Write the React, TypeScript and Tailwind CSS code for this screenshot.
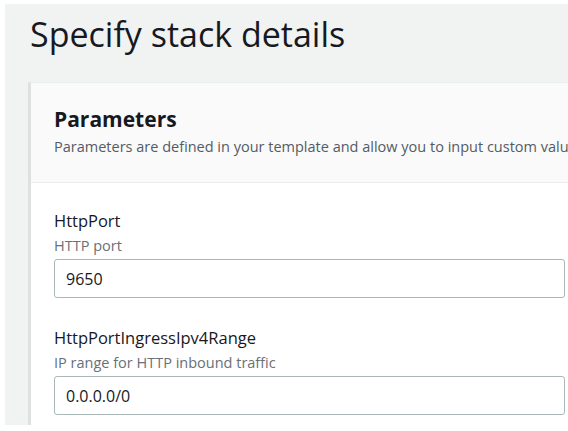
export default function App() {
  return (
    <div
      className="w-[568px] h-[431px] bg-white pt-[4px] pl-[5px] pb-[6px] overflow-hidden"
      style={{ fontFamily: '"Open Sans", "Noto Sans", sans-serif' }}
    >
      <div className="h-full bg-[#f1f2f2] overflow-hidden">
        <h1 className="pl-[25px] pt-[10px] text-[34px] leading-[40px] text-[#16191f] whitespace-nowrap">
          Specify stack details
        </h1>

        <div className="ml-[23px] mt-[28px] h-full bg-white border-l-[3px] border-[#dde1e1] border-t border-t-[#eaeded] overflow-hidden">
          {/* header */}
          <div className="bg-[#fafafa] pl-[23px] pt-[23px] pb-[25px] border-b border-[#eaeded]">
            <h2 className="text-[21px] leading-[26px] font-bold text-[#16191f] whitespace-nowrap">Parameters</h2>
            <p className="mt-[5px] text-[14.5px] leading-[20px] text-[#545b64] whitespace-nowrap">
              Parameters are defined in your template and allow you to input custom values
            </p>
          </div>

          {/* body */}
          <div className="pl-[23px] pt-[27px] flex flex-col gap-[29px]">
            <Field label="HttpPort" hint="HTTP port" value="9650" />
            <Field label="HttpPortIngressIpv4Range" hint="IP range for HTTP inbound traffic" value="0.0.0.0/0" />
          </div>
        </div>
      </div>
    </div>
  );
}

function Field({ label, hint, value }: { label: string; hint: string; value: string }) {
  return (
    <div className="flex flex-col">
      <div className="text-[16.5px] leading-[22px] text-[#16191f] whitespace-nowrap">{label}</div>
      <div className="mt-[4px] text-[14.5px] leading-[20px] text-[#687078] whitespace-nowrap">{hint}</div>
      <div className="mt-[3px] w-[511px] h-[39px] rounded-[3px] border border-[#aab7b8] bg-white flex items-center pl-[11px] text-[16px] text-[#16191f]">
        {value}
      </div>
    </div>
  );
}
